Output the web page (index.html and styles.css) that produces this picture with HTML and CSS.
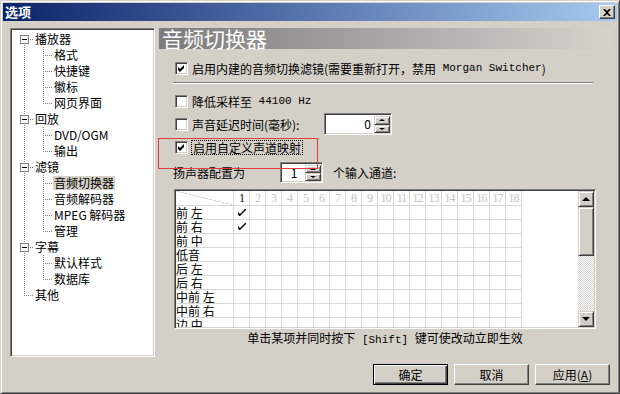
FILE: index.html
```html
<!DOCTYPE html>
<html lang="zh-CN">
<head>
    <meta charset="UTF-8">
    <title>选项</title>
    <link rel="stylesheet" href="styles.css">
</head>
<body>
<div class="window">
    <div class="titlebar">
        <span class="title">选项</span>
        <span class="close"><svg width="8" height="7" viewBox="0 0 8 7"><path d="M0 0h2l2 2 2-2h2L5 3.5 8 7H6L4 5 2 7H0l3-3.5z" fill="#000"/></svg></span>
    </div>

    <div class="content">
        <div class="main">
            <!-- 左侧树 -->
            <div class="tree">
                <div class="row"><i class="c b first"><b class="box"></b></i><span class="lbl">播放器</span></div>
                <div class="row"><i class="c v"></i><i class="c t"></i><span class="lbl">格式</span></div>
                <div class="row"><i class="c v"></i><i class="c t"></i><span class="lbl">快捷键</span></div>
                <div class="row"><i class="c v"></i><i class="c t"></i><span class="lbl">徽标</span></div>
                <div class="row"><i class="c v"></i><i class="c l"></i><span class="lbl">网页界面</span></div>
                <div class="row"><i class="c b"><b class="box"></b></i><span class="lbl">回放</span></div>
                <div class="row"><i class="c v"></i><i class="c t"></i><span class="lbl">DVD/OGM</span></div>
                <div class="row"><i class="c v"></i><i class="c l"></i><span class="lbl">输出</span></div>
                <div class="row"><i class="c b"><b class="box"></b></i><span class="lbl">滤镜</span></div>
                <div class="row"><i class="c v"></i><i class="c t"></i><span class="lbl sel">音频切换器</span></div>
                <div class="row"><i class="c v"></i><i class="c t"></i><span class="lbl">音频解码器</span></div>
                <div class="row"><i class="c v"></i><i class="c t"></i><span class="lbl">MPEG 解码器</span></div>
                <div class="row"><i class="c v"></i><i class="c l"></i><span class="lbl">管理</span></div>
                <div class="row"><i class="c b"><b class="box"></b></i><span class="lbl">字幕</span></div>
                <div class="row"><i class="c v"></i><i class="c t"></i><span class="lbl">默认样式</span></div>
                <div class="row"><i class="c v"></i><i class="c l"></i><span class="lbl">数据库</span></div>
                <div class="row"><i class="c l"></i><span class="lbl">其他</span></div>
            </div>

            <!-- 右侧页面 -->
            <div class="page">
                <div class="caption">音频切换器</div>

                <div class="check row1"><span class="cb on"><svg width="7" height="7" viewBox="0 0 7 7"><path d="M0 2l2 2 4-4v3L2 7 0 5z" fill="#000"/></svg></span>启用内建的音频切换滤镜(需要重新打开，禁用<span class="en"> Morgan Switcher</span>)</div>
                <div class="sep"></div>

                <div class="check row2"><span class="cb"></span>降低采样至<span class="en"> 44100 Hz</span></div>

                <div class="check row3">
                    <span class="cb"></span>
                    <span class="fixed">声音延迟时间(毫秒):</span>
                    <span class="spin delay">
                        <span class="val">0</span>
                        <span class="arrows"><i class="up"></i><i class="dn"></i></span>
                    </span>
                </div>

                <div class="check row4"><span class="cb on"><svg width="7" height="7" viewBox="0 0 7 7"><path d="M0 2l2 2 4-4v3L2 7 0 5z" fill="#000"/></svg></span><span class="focus">启用自定义声道映射</span></div>

                <div class="speakers">
                    <span class="spk-label">扬声器配置为</span>
                    <span class="spin count">
                        <span class="val">1</span>
                        <span class="arrows"><i class="up"></i><i class="dn"></i></span>
                    </span>
                    <span class="spk-after">个输入通道:</span>
                </div>

                <div class="matrix">
                    <div class="table">
                        <div class="mrow head">
                            <span class="mlabel diag"></span>
                            <span class="nums">
                                <b class="on">1</b><b>2</b><b>3</b><b>4</b><b>5</b><b>6</b><b>7</b><b>8</b><b>9</b>
                                <b>10</b><b>11</b><b>12</b><b>13</b><b>14</b><b>15</b><b>16</b><b>17</b><b>18</b>
                            </span>
                        </div>
                        <div class="mrow"><span class="mlabel">前 左</span><span class="mcells"><span class="tick"><svg width="8" height="7" viewBox="0 0 8 7"><path d="M0 3l2 2 5-5h1v1L2 7H1L0 5z" fill="#000"/></svg></span></span></div>
                        <div class="mrow"><span class="mlabel">前 右</span><span class="mcells"><span class="tick"><svg width="8" height="7" viewBox="0 0 8 7"><path d="M0 3l2 2 5-5h1v1L2 7H1L0 5z" fill="#000"/></svg></span></span></div>
                        <div class="mrow"><span class="mlabel">前 中</span><span class="mcells"></span></div>
                        <div class="mrow"><span class="mlabel">低音</span><span class="mcells"></span></div>
                        <div class="mrow"><span class="mlabel">后 左</span><span class="mcells"></span></div>
                        <div class="mrow"><span class="mlabel">后 右</span><span class="mcells"></span></div>
                        <div class="mrow"><span class="mlabel">中前 左</span><span class="mcells"></span></div>
                        <div class="mrow"><span class="mlabel">中前 右</span><span class="mcells"></span></div>
                        <div class="mrow"><span class="mlabel">边 中</span><span class="mcells"></span></div>
                    </div>
                    <div class="scrollbar">
                        <span class="sbtn"><i class="up"></i></span>
                        <span class="thumb"></span>
                        <span class="track"></span>
                        <span class="sbtn"><i class="dn"></i></span>
                    </div>
                </div>

                <div class="hint">单击某项并同时按下<span class="en"> [Shift] </span>键可使改动立即生效</div>

                <!-- 红色标注框 -->
                <div class="mark"></div>
            </div>
        </div>

        <div class="buttons">
            <span class="btn default">确定</span>
            <span class="btn">取消</span>
            <span class="btn">应用(<u>A</u>)</span>
        </div>
    </div>
</div>
</body>
</html>
```

FILE: styles.css
```css
* {
    box-sizing: border-box;
}
body {
    margin: 0;
    font-family: "Noto Sans CJK SC", sans-serif;
    font-size: 12px;
    color: #000;
    background: #d4d0c8;
}
.window {
    width: 620px;
    height: 394px;
    background: #d4d0c8;
    border: 1px solid;
    border-color: #d4d0c8 #404040 #404040 #d4d0c8;
    box-shadow: inset 1px 1px #fff, inset -1px -1px #808080;
    padding: 2px;
    display: flex;
    flex-direction: column;
}

/* 标题栏 */
.titlebar {
    height: 18px;
    background: linear-gradient(to right, #0a246a, #a6caf0);
    display: flex;
    align-items: center;
    justify-content: space-between;
    padding-left: 2px;
}
.title {
    color: #fff;
    font-weight: bold;
    font-size: 13px;
    line-height: 18px;
}
.close {
    width: 16px;
    height: 14px;
    margin-right: 2px;
    background: #d4d0c8;
    border: 1px solid;
    border-color: #fff #404040 #404040 #fff;
    box-shadow: inset -1px -1px #808080;
    display: flex;
    align-items: center;
    justify-content: center;
}

.content {
    flex: 1;
    padding: 7px 6px 0 7px;
    display: flex;
    flex-direction: column;
}
.main {
    display: flex;
    gap: 4px;
    height: 329px;
}

/* 树形列表 */
.tree {
    width: 145px;
    background: #fff;
    border: 1px solid;
    border-color: #808080 #fff #fff #808080;
    box-shadow: inset 1px 1px #404040, inset -1px -1px #d4d0c8;
    padding: 2px 0 0 4px;
}
.row {
    display: flex;
    align-items: center;
    height: 16px;
}
.c {
    display: block;
    width: 19px;
    height: 16px;
    flex: none;
}
.v {
    background: repeating-linear-gradient(#808080 0 1px, transparent 1px 2px) 9px 0 / 1px 16px no-repeat;
}
.t {
    background:
        repeating-linear-gradient(to right, #808080 0 1px, transparent 1px 2px) 11px 8px / 7px 1px no-repeat,
        repeating-linear-gradient(#808080 0 1px, transparent 1px 2px) 9px 0 / 1px 16px no-repeat;
}
.l {
    background:
        repeating-linear-gradient(to right, #808080 0 1px, transparent 1px 2px) 11px 8px / 7px 1px no-repeat,
        repeating-linear-gradient(#808080 0 1px, transparent 1px 2px) 9px 0 / 1px 9px no-repeat;
}
.b {
    background:
        repeating-linear-gradient(to right, #808080 0 1px, transparent 1px 2px) 15px 8px / 3px 1px no-repeat,
        repeating-linear-gradient(#808080 0 1px, transparent 1px 2px) 9px 0 / 1px 16px no-repeat;
}
.b.first {
    background:
        repeating-linear-gradient(to right, #808080 0 1px, transparent 1px 2px) 15px 8px / 3px 1px no-repeat,
        repeating-linear-gradient(#808080 0 1px, transparent 1px 2px) 9px 8px / 1px 8px no-repeat;
}
.box {
    display: block;
    position: relative;
    width: 9px;
    height: 9px;
    margin: 4px 0 0 5px;
    border: 1px solid #808080;
    background: #fff;
}
.box::after {
    content: "";
    position: absolute;
    left: 1px;
    top: 3px;
    width: 5px;
    height: 1px;
    background: #000;
}
.lbl {
    line-height: 14px;
    padding: 0 1px;
    white-space: nowrap;
}
.lbl.sel {
    background: #d4d0c8;
}

/* 右侧页面 */
.page {
    width: 452px;
    position: relative;
    display: flex;
    flex-direction: column;
}
.caption {
    height: 21px;
    background: linear-gradient(to right, #7c7c7c, #d6d3cd);
    color: #fff;
    font-size: 21px;
    line-height: 21px;
    padding-left: 3px;
    white-space: nowrap;
}
.check {
    display: flex;
    align-items: center;
    height: 16px;
    margin-left: 16px;
    white-space: nowrap;
}
.row1 { margin-top: 11px; }
.row2 { margin-top: 9px; }
.row3 { margin-top: 4px; height: 22px; }
.row4 { margin-top: 4px; }
.cb {
    width: 13px;
    height: 13px;
    flex: none;
    margin-right: 4px;
    background: #fff;
    border: 1px solid;
    border-color: #808080 #fff #fff #808080;
    box-shadow: inset 1px 1px #404040, inset -1px -1px #d4d0c8;
    display: flex;
    align-items: center;
    justify-content: center;
}
.en {
    font-family: "Liberation Mono", monospace;
    font-size: 11px;
    white-space: pre;
}
.sep {
    margin: 6px 0 0 14px;
    width: 420px;
    height: 2px;
    border-top: 1px solid #808080;
    border-bottom: 1px solid #fff;
}
.fixed {
    width: 132px;
}
.focus {
    outline: 1px dotted #000;
    padding: 0 1px;
    line-height: 13px;
}

/* 数字输入框 */
.spin {
    display: flex;
    background: #fff;
    border: 1px solid;
    border-color: #808080 #fff #fff #808080;
    box-shadow: inset 1px 1px #404040, inset -1px -1px #d4d0c8;
    padding: 2px 1px 1px 2px;
}
.spin.delay {
    width: 68px;
    height: 22px;
}
.spin.count {
    width: 43px;
    height: 21px;
}
.val {
    flex: 1;
    text-align: right;
    padding-right: 3px;
    line-height: 16px;
}
.count .val {
    text-align: center;
    padding-left: 3px;
}
.arrows {
    width: 16px;
    display: flex;
    flex-direction: column;
}
.arrows i,
.sbtn {
    flex: 1;
    background: #d4d0c8;
    border: 1px solid;
    border-color: #d4d0c8 #404040 #404040 #d4d0c8;
    box-shadow: inset 1px 1px #fff, inset -1px -1px #808080;
    display: flex;
    align-items: center;
    justify-content: center;
}
.arrows i::after {
    content: "";
    border: 2px solid transparent;
    border-left-width: 3px;
    border-right-width: 3px;
}
.arrows .up::after {
    border-bottom-color: #000;
    border-top-width: 0;
}
.arrows .dn::after {
    border-top-color: #000;
    border-bottom-width: 0;
}

.speakers {
    display: flex;
    align-items: center;
    margin: 7px 0 0 14px;
    height: 21px;
    white-space: nowrap;
}
.spk-label {
    width: 107px;
}
.spk-after {
    margin-left: 10px;
}

/* 声道矩阵 */
.matrix {
    margin: 6px 0 0 15px;
    width: 422px;
    height: 140px;
    background: #fff;
    border: 1px solid;
    border-color: #808080 #fff #fff #808080;
    box-shadow: inset 1px 1px #404040, inset -1px -1px #d4d0c8;
    padding: 1px;
    display: flex;
}
.table {
    flex: 1;
    overflow: hidden;
}
.mrow {
    display: flex;
    height: 14px;
}
.mrow.head {
    height: 15px;
}
.mlabel {
    width: 58px;
    flex: none;
    border-right: 1px solid #d8d8d8;
    border-bottom: 1px solid #d8d8d8;
    line-height: 13px;
    white-space: pre;
}
.diag {
    background: linear-gradient(to top right, transparent calc(50% - 0.6px), #c8c8c8 50%, transparent calc(50% + 0.6px));
}
.nums {
    display: flex;
}
.nums b {
    width: 16px;
    border-right: 1px solid #d8d8d8;
    border-bottom: 1px solid #d8d8d8;
    font-family: "Liberation Serif", serif;
    font-weight: normal;
    font-size: 12px;
    line-height: 14px;
    text-align: center;
    letter-spacing: -1px;
    color: #c8c4bc;
    text-shadow: 1px 1px #fff;
}
.nums b.on {
    color: #000;
    text-shadow: none;
}
.mcells {
    width: 288px;
    flex: none;
    border-bottom: 1px solid #d8d8d8;
    background: repeating-linear-gradient(to right, transparent 0 15px, #d8d8d8 15px 16px);
}
.tick {
    display: flex;
    width: 15px;
    height: 13px;
    align-items: center;
    justify-content: center;
}

.scrollbar {
    width: 16px;
    flex: none;
    display: flex;
    flex-direction: column;
}
.sbtn {
    flex: none;
    height: 16px;
}
.sbtn i {
    border: 4px solid transparent;
}
.sbtn .up {
    border-bottom-color: #000;
    border-top-width: 0;
    margin-top: -1px;
}
.sbtn .dn {
    border-top-color: #000;
    border-bottom-width: 0;
}
.thumb {
    height: 49px;
    background: #d4d0c8;
    border: 1px solid;
    border-color: #d4d0c8 #404040 #404040 #d4d0c8;
    box-shadow: inset 1px 1px #fff, inset -1px -1px #808080;
}
.track {
    flex: 1;
    background: repeating-conic-gradient(#fff 0 25%, #d4d0c8 0 50%) 0 0 / 2px 2px;
}

.hint {
    margin-top: 2px;
    text-align: center;
    line-height: 14px;
    white-space: nowrap;
}

/* 红色标注框，覆盖在内容上 */
.mark {
    position: absolute;
    left: -1px;
    top: 110px;
    width: 160px;
    height: 31px;
    border: 1px solid #e23c3c;
}

/* 底部按钮 */
.buttons {
    display: flex;
    justify-content: flex-end;
    gap: 6px;
    margin-top: 7px;
    padding-right: 1px;
}
.btn {
    width: 75px;
    height: 21px;
    border: 1px solid;
    border-color: #fff #404040 #404040 #fff;
    box-shadow: inset -1px -1px #808080;
    display: flex;
    align-items: center;
    justify-content: center;
}
.btn.default {
    border-color: #000;
    box-shadow: inset 1px 1px #fff, inset -1px -1px #404040, inset -2px -2px #808080;
}
```
